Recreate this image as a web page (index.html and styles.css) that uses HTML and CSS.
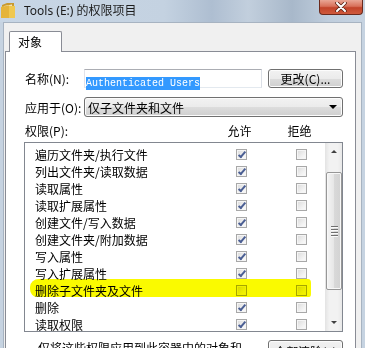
FILE: index.html
```html
<!DOCTYPE html>
<html lang="zh-CN">
<head>
  <meta charset="UTF-8" />
  <title>Tools (E:) 的权限项目</title>
  <link rel="stylesheet" href="styles.css">
</head>
<body>

  <div class="window">
    <div class="titlebar">
      <svg class="folder-icon" viewBox="0 0 16 16" width="16" height="16">
        <path d="M2 3 L7 1 L14 1 L14 15 L2 15 Z" fill="#c99a2e" />
        <path d="M4 4 L12 2.5 L12 15 L4 15 Z" fill="#f6f2e4" />
        <path d="M1 5 L9 3.5 L15 4 L15 16 L1 16 Z" fill="#f0c850" />
        <path d="M1 5 L9 3.5 L9 16 L1 16 Z" fill="#e5b43a" />
      </svg>
      <span class="title">Tools (E:) 的权限项目</span>
      <div class="close-btn">
        <svg viewBox="0 0 12 10" width="12" height="10">
          <path d="M2 1 L10 9 M10 1 L2 9" stroke="#5a2418" stroke-width="3.6" stroke-linecap="round" />
          <path d="M2 1 L10 9 M10 1 L2 9" stroke="#fff" stroke-width="2" stroke-linecap="round" />
        </svg>
      </div>
    </div>

    <div class="frame">
      <div class="dialog">
        <div class="tabs">
          <div class="tab">对象</div>
        </div>

        <div class="panel">
          <div class="form-row">
            <span class="label">名称(N):</span>
            <div class="textbox"><span class="selected">Authenticated Users</span></div>
            <button class="btn btn-change">更改(C)...</button>
          </div>

          <div class="form-row">
            <span class="label">应用于(O):</span>
            <div class="combo">
              <span>仅子文件夹和文件</span>
              <span class="combo-arrow"></span>
            </div>
          </div>

          <div class="perm-header">
            <span>权限(P):</span>
            <span class="col">允许</span>
            <span></span>
            <span class="col">拒绝</span>
          </div>

          <div class="perm-list">
            <div class="perm-rows">
              <div class="perm-row"><span class="perm-name">遍历文件夹/执行文件</span><span class="cell"><span class="chk checked"></span></span><span></span><span class="cell"><span class="chk"></span></span></div>
              <div class="perm-row"><span class="perm-name">列出文件夹/读取数据</span><span class="cell"><span class="chk checked"></span></span><span></span><span class="cell"><span class="chk"></span></span></div>
              <div class="perm-row"><span class="perm-name">读取属性</span><span class="cell"><span class="chk checked"></span></span><span></span><span class="cell"><span class="chk"></span></span></div>
              <div class="perm-row"><span class="perm-name">读取扩展属性</span><span class="cell"><span class="chk checked"></span></span><span></span><span class="cell"><span class="chk"></span></span></div>
              <div class="perm-row"><span class="perm-name">创建文件/写入数据</span><span class="cell"><span class="chk checked"></span></span><span></span><span class="cell"><span class="chk"></span></span></div>
              <div class="perm-row"><span class="perm-name">创建文件夹/附加数据</span><span class="cell"><span class="chk checked"></span></span><span></span><span class="cell"><span class="chk"></span></span></div>
              <div class="perm-row"><span class="perm-name">写入属性</span><span class="cell"><span class="chk checked"></span></span><span></span><span class="cell"><span class="chk"></span></span></div>
              <div class="perm-row"><span class="perm-name">写入扩展属性</span><span class="cell"><span class="chk checked"></span></span><span></span><span class="cell"><span class="chk"></span></span></div>
              <!-- 荧光笔标记的那一行 -->
              <div class="perm-row marked"><span class="perm-name">删除子文件夹及文件</span><span class="cell"><span class="chk"></span></span><span></span><span class="cell"><span class="chk"></span></span></div>
              <div class="perm-row"><span class="perm-name">删除</span><span class="cell"><span class="chk checked"></span></span><span></span><span class="cell"><span class="chk"></span></span></div>
              <div class="perm-row"><span class="perm-name">读取权限</span><span class="cell"><span class="chk checked"></span></span><span></span><span class="cell"><span class="chk"></span></span></div>
            </div>

            <div class="scrollbar">
              <div class="sb-btn"><span class="arrow-up"></span></div>
              <div class="sb-track">
                <div class="sb-thumb">
                  <span class="grip"></span>
                  <span class="grip"></span>
                  <span class="grip"></span>
                  <span class="grip"></span>
                </div>
              </div>
              <div class="sb-btn"><span class="arrow-down"></span></div>
            </div>
          </div>

          <div class="bottom-row">
            <span class="bottom-text">仅将这些权限应用到此容器中的对象和<br>/或容器(T)</span>
            <button class="btn btn-clear">全部清除(L)</button>
          </div>
        </div>
      </div>
    </div>
  </div>

</body>
</html>
```

FILE: styles.css
```css
html, body {
  margin: 0;
  padding: 0;
}

body {
  width: 365px;
  height: 348px;
  overflow: hidden;
  font-family: "Noto Sans CJK SC", "Noto Sans", sans-serif;
  font-size: 12px;
  color: #000;
  background: #c6d3e1;
}

.window {
  display: flex;
  flex-direction: column;
  height: 100%;
}

/* pasek tytułu */
.titlebar {
  height: 22px;
  flex: none;
  display: flex;
  align-items: flex-start;
  background: linear-gradient(90deg, #c8d6e5 0%, #c4d2e1 45%, #aebed1 58%, #c2cfdd 68%, #a8b8ca 80%, #bfcddc 90%, #c6d3e1 100%);
}

.folder-icon {
  margin-top: 2px;
  flex: none;
}

.title {
  margin-left: 8px;
  line-height: 21px;
  font-family: "Noto Sans", "Noto Sans CJK SC", sans-serif;
  font-size: 12px;
  color: #1c1c1c;
}

.close-btn {
  margin-left: auto;
  margin-right: 2px;
  width: 42px;
  height: 14px;
  border: 1px solid #6b2a1d;
  border-top: none;
  border-radius: 0 0 4px 4px;
  background: linear-gradient(#e9a695 0%, #d8705a 45%, #c2432a 55%, #cf5a3c 100%);
  display: flex;
  align-items: center;
  justify-content: center;
}

.frame {
  flex: 1;
  display: flex;
  padding: 0 3px;
  min-height: 0;
}

.dialog {
  flex: 1;
  background: #f0f0f0;
  border: 1px solid #a7b3c1;
  border-bottom: none;
  padding-top: 8px;
  display: flex;
  flex-direction: column;
}

.tabs {
  display: flex;
  padding-left: 5px;
}

.tab {
  width: 43px;
  height: 20px;
  padding-left: 8px;
  line-height: 20px;
  background: #fff;
  border: 1px solid #898c95;
  border-bottom: none;
  border-radius: 2px 2px 0 0;
  margin-bottom: -1px;
  position: relative;
  z-index: 1;
}

.panel {
  flex: 1;
  margin: 0 5px 0 1px;
  background: #fff;
  border: 1px solid #898c95;
  border-bottom: none;
  padding: 17px 12px 0 19px;
}

.form-row {
  display: flex;
  align-items: center;
}

.form-row + .form-row {
  margin-top: 9px;
}

.label {
  width: 59px;
  flex: none;
}

.textbox {
  width: 178px;
  height: 19px;
  box-sizing: border-box;
  border: 1px solid;
  border-color: #abadb3 #dbdfe6 #e3e9ef #e2e3ea;
  padding: 2px 0 0 1px;
}

.selected {
  display: inline-block;
  background: #3399ff;
  color: #fff;
  font-family: "Liberation Mono", monospace;
  font-size: 10px;
  line-height: 13px;
}

.btn {
  height: 19px;
  box-sizing: border-box;
  border: 1px solid #707070;
  border-radius: 3px;
  background: linear-gradient(#f2f2f2 0%, #ebebeb 50%, #dddddd 50%, #cfcfcf 100%);
  font: inherit;
  color: #000;
  padding: 0;
  text-align: center;
  box-shadow: inset 0 0 0 1px #fcfcfc;
}

.btn-change {
  flex: 1;
  margin-left: 6px;
}

.combo {
  flex: 1;
  height: 20px;
  box-sizing: border-box;
  border: 1px solid #707070;
  border-radius: 3px;
  background: linear-gradient(#f2f2f2 0%, #ebebeb 50%, #dddddd 50%, #cfcfcf 100%);
  box-shadow: inset 0 0 0 1px #fcfcfc;
  display: flex;
  align-items: center;
  padding-left: 3px;
}

.combo-arrow {
  margin-left: auto;
  margin-right: 5px;
  width: 0;
  height: 0;
  border-left: 4px solid transparent;
  border-right: 4px solid transparent;
  border-top: 4px solid #000;
}

.perm-header {
  display: grid;
  grid-template-columns: 203px 23px 37px 23px;
  line-height: 16px;
  margin-top: 6px;
}

.perm-header .col {
  justify-self: center;
  white-space: nowrap;
}

.perm-list {
  margin: 3px 0 0 -1px;
  height: 190px;
  box-sizing: border-box;
  border: 1px solid #828790;
  display: flex;
  overflow: hidden;
}

.perm-rows {
  flex: 1;
  padding-top: 3px;
}

.perm-row {
  display: grid;
  grid-template-columns: 205px 23px 37px 23px;
  height: 17px;
  align-items: center;
}

.perm-name {
  padding-left: 10px;
  line-height: 17px;
  white-space: nowrap;
}

.cell {
  display: flex;
  justify-content: center;
}

.chk {
  display: block;
  width: 11px;
  height: 11px;
  box-sizing: border-box;
  border: 1px solid #a8a8a8;
  background: linear-gradient(135deg, #dadada 0%, #f4f4f4 70%, #fbfbfb 100%);
  box-shadow: inset 0 0 0 1px #f5f5f5;
  position: relative;
}

.chk.checked::after {
  content: "";
  position: absolute;
  left: 3px;
  top: 0;
  width: 2px;
  height: 6px;
  border: solid #4b5f94;
  border-width: 0 2px 2px 0;
  transform: rotate(40deg);
}

/* żółty marker nad wierszem */
.perm-row.marked {
  position: relative;
}

.perm-row.marked::before {
  content: "";
  position: absolute;
  left: 5px;
  width: 281px;
  top: -3px;
  height: 18px;
  background: #fafa00;
  border-radius: 9px 3px 2px 7px / 8px 4px 3px 8px;
  mix-blend-mode: multiply;
  z-index: 2;
}

.scrollbar {
  width: 17px;
  flex: none;
  display: flex;
  flex-direction: column;
  background: linear-gradient(90deg, #e3e3e3 0%, #f2f2f2 25%, #f2f2f2 75%, #e8e8e8 100%);
}

.sb-btn {
  height: 17px;
  flex: none;
  display: flex;
  align-items: center;
  justify-content: center;
}

.arrow-up {
  width: 0;
  height: 0;
  border-left: 3px solid transparent;
  border-right: 3px solid transparent;
  border-bottom: 3px solid #404040;
}

.arrow-down {
  width: 0;
  height: 0;
  border-left: 3px solid transparent;
  border-right: 3px solid transparent;
  border-top: 3px solid #404040;
}

.sb-track {
  flex: 1;
  padding-top: 12px;
}

.sb-thumb {
  height: 118px;
  margin: 0 0 0 1px;
  box-sizing: border-box;
  border: 1px solid #979797;
  border-radius: 2px;
  background: linear-gradient(90deg, #f4f4f4 0%, #e6e6e6 50%, #d9d9d9 50%, #d2d2d2 100%);
  box-shadow: inset 0 0 0 1px #f8f8f8;
  display: flex;
  flex-direction: column;
  align-items: center;
  justify-content: center;
  gap: 1px;
}

.grip {
  width: 7px;
  height: 1px;
  background: #707070;
  border-bottom: 1px solid #fafafa;
}

.bottom-row {
  display: flex;
  align-items: flex-start;
  margin-top: 8px;
}

.bottom-text {
  padding-left: 13px;
  line-height: 16px;
  white-space: nowrap;
}

.btn-clear {
  margin-left: auto;
  width: 75px;
  height: 22px;
  flex: none;
}
```
